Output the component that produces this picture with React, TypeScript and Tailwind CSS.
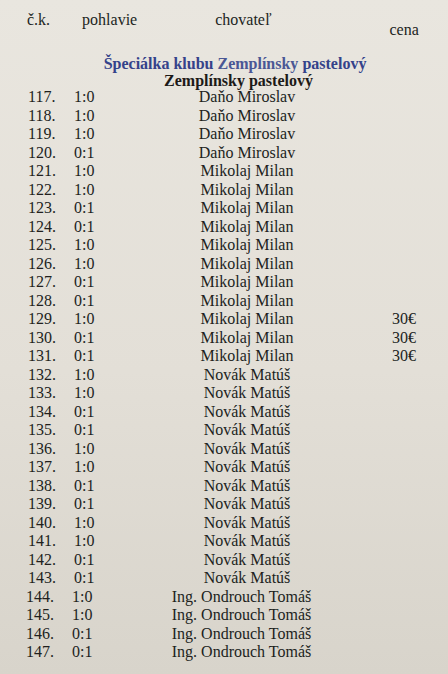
import React from "react";

type Row = { n: number; s: string; name: string; price?: string };

const rows: Row[] = [
  { n: 117, s: "1:0", name: "Daňo Miroslav" },
  { n: 118, s: "1:0", name: "Daňo Miroslav" },
  { n: 119, s: "1:0", name: "Daňo Miroslav" },
  { n: 120, s: "0:1", name: "Daňo Miroslav" },
  { n: 121, s: "1:0", name: "Mikolaj Milan" },
  { n: 122, s: "1:0", name: "Mikolaj Milan" },
  { n: 123, s: "0:1", name: "Mikolaj Milan" },
  { n: 124, s: "0:1", name: "Mikolaj Milan" },
  { n: 125, s: "1:0", name: "Mikolaj Milan" },
  { n: 126, s: "1:0", name: "Mikolaj Milan" },
  { n: 127, s: "0:1", name: "Mikolaj Milan" },
  { n: 128, s: "0:1", name: "Mikolaj Milan" },
  { n: 129, s: "1:0", name: "Mikolaj Milan", price: "30€" },
  { n: 130, s: "0:1", name: "Mikolaj Milan", price: "30€" },
  { n: 131, s: "0:1", name: "Mikolaj Milan", price: "30€" },
  { n: 132, s: "1:0", name: "Novák Matúš" },
  { n: 133, s: "1:0", name: "Novák Matúš" },
  { n: 134, s: "0:1", name: "Novák Matúš" },
  { n: 135, s: "0:1", name: "Novák Matúš" },
  { n: 136, s: "1:0", name: "Novák Matúš" },
  { n: 137, s: "1:0", name: "Novák Matúš" },
  { n: 138, s: "0:1", name: "Novák Matúš" },
  { n: 139, s: "0:1", name: "Novák Matúš" },
  { n: 140, s: "1:0", name: "Novák Matúš" },
  { n: 141, s: "1:0", name: "Novák Matúš" },
  { n: 142, s: "0:1", name: "Novák Matúš" },
  { n: 143, s: "0:1", name: "Novák Matúš" },
  { n: 144, s: "1:0", name: "Ing. Ondrouch Tomáš" },
  { n: 145, s: "1:0", name: "Ing. Ondrouch Tomáš" },
  { n: 146, s: "0:1", name: "Ing. Ondrouch Tomáš" },
  { n: 147, s: "0:1", name: "Ing. Ondrouch Tomáš" },
];

export default function App() {
  return (
    <div
      className="w-[448px] h-[674px] overflow-hidden text-[#211f1d] text-[16px] bg-[linear-gradient(180deg,#e9e6df_0%,#e3dfd7_55%,#d8d4cb_100%)]"
      style={{ fontFamily: '"Liberation Serif", "Times New Roman", serif' }}
    >
      <div className="pt-[10px] flex h-[30px] leading-[19px]">
        <span className="ml-[27px]">č.k.</span>
        <span className="ml-[32px]">pohlavie</span>
        <span className="ml-[78px]">chovateľ</span>
        <span className="ml-[118px] mt-[10px]">cena</span>
      </div>
      <div className="mt-[25px] h-[17px] leading-[17px] font-bold text-center pl-[22px] text-[#34428a]">
        Špeciálka klubu <span className="text-[#4a5795]">Zemplínsky</span> pastelový
      </div>
      <div className="h-[17px] leading-[17px] font-bold text-center pl-[29px] text-[#1d1a18]">
        Zemplínsky pastelový
      </div>
      <div className="mt-[-1px] flex flex-col">
        {rows.map((r) => {
          const late = r.n >= 144;
          return (
            <div key={r.n} className="flex h-[18.5px] leading-[18.5px] items-center">
              <span className={late ? "w-[46px] ml-[26px]" : "w-[46px] ml-[28px]"}>{r.n}.</span>
              <span className="w-[60px]">{r.s}</span>
              <span className={late ? "w-[219px] text-center" : "w-[226px] text-center"}>{r.name}</span>
              <span className="ml-[32px]">{r.price ?? ""}</span>
            </div>
          );
        })}
      </div>
    </div>
  );
}
